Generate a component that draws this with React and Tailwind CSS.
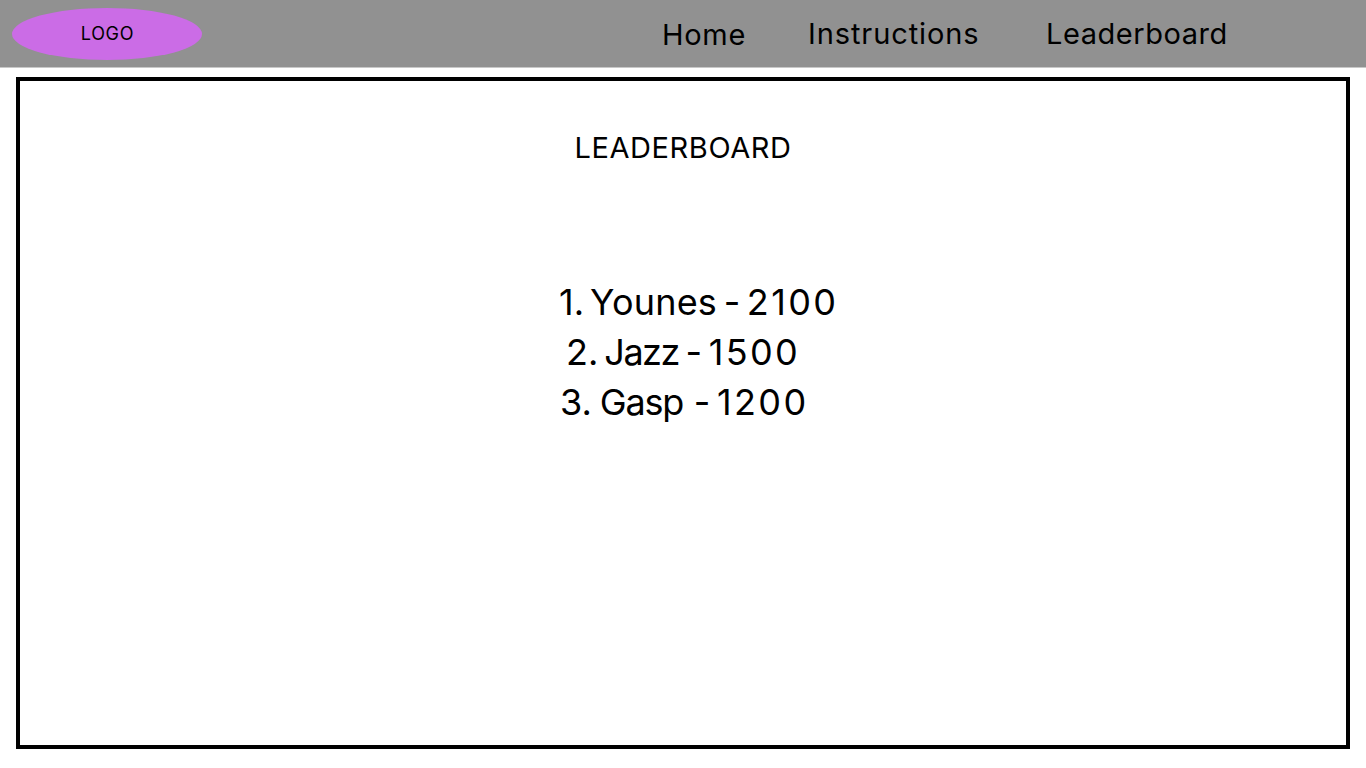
import React from "react";

const navLinks = [
  { label: "Home", className: "w-[146px] pt-[2px] tracking-[0.7px]" },
  { label: "Instructions", className: "w-[238px] pt-[1px] tracking-[0.9px]" },
  { label: "Leaderboard", className: "pt-[1px] tracking-[0.55px]" },
];

const players = [
  { rank: "1.", name: "Younes", score: "2100", rowClass: "ml-[539px]", nameClass: "ml-[6px] tracking-[0.2px]", dashClass: "" },
  { rank: "2.", name: "Jazz", score: "1500", rowClass: "ml-[546px]", nameClass: "ml-[6px] tracking-[-1.5px]", dashClass: "" },
  { rank: "3.", name: "Gasp", score: "1200", rowClass: "ml-[540px]", nameClass: "ml-[8px] tracking-[-1.2px]", dashClass: "ml-[4px]" },
];

const App = () => {
  return (
    <div className="min-h-[768px] bg-white font-['Inter',sans-serif] text-black">
      <header className="flex h-[68px] items-center border-b border-[#c8c8c8] bg-[#919191] pl-3">
        <div className="flex h-[52px] w-[190px] items-center justify-center rounded-[50%] bg-[#cb6ce6] pl-[1px] pb-[1px] text-[18px] tracking-[0.7px]">
          LOGO
        </div>
        <nav className="ml-[460px] flex text-[29px]">
          {navLinks.map((link) => (
            <a key={link.label} href="#" className={link.className}>
              {link.label}
            </a>
          ))}
        </nav>
      </header>

      <main className="mx-4 mt-[9px] h-[672px] w-[1334px] border-4 border-black">
        <h1 className="mt-[47px] text-center text-[29px] leading-[40px] tracking-[0.6px]">LEADERBOARD</h1>
        <ol className="mt-[109px] text-[36px] leading-[50px] [word-spacing:-3.5px]">
          {players.map((player) => (
            <li key={player.rank} className={player.rowClass}>
              {player.rank}
              <span className={player.nameClass}>{player.name}</span>
              <span className={player.dashClass}> - </span>
              <span className="tracking-[2.4px]">{player.score}</span>
            </li>
          ))}
        </ol>
      </main>
    </div>
  );
};

export default App;
